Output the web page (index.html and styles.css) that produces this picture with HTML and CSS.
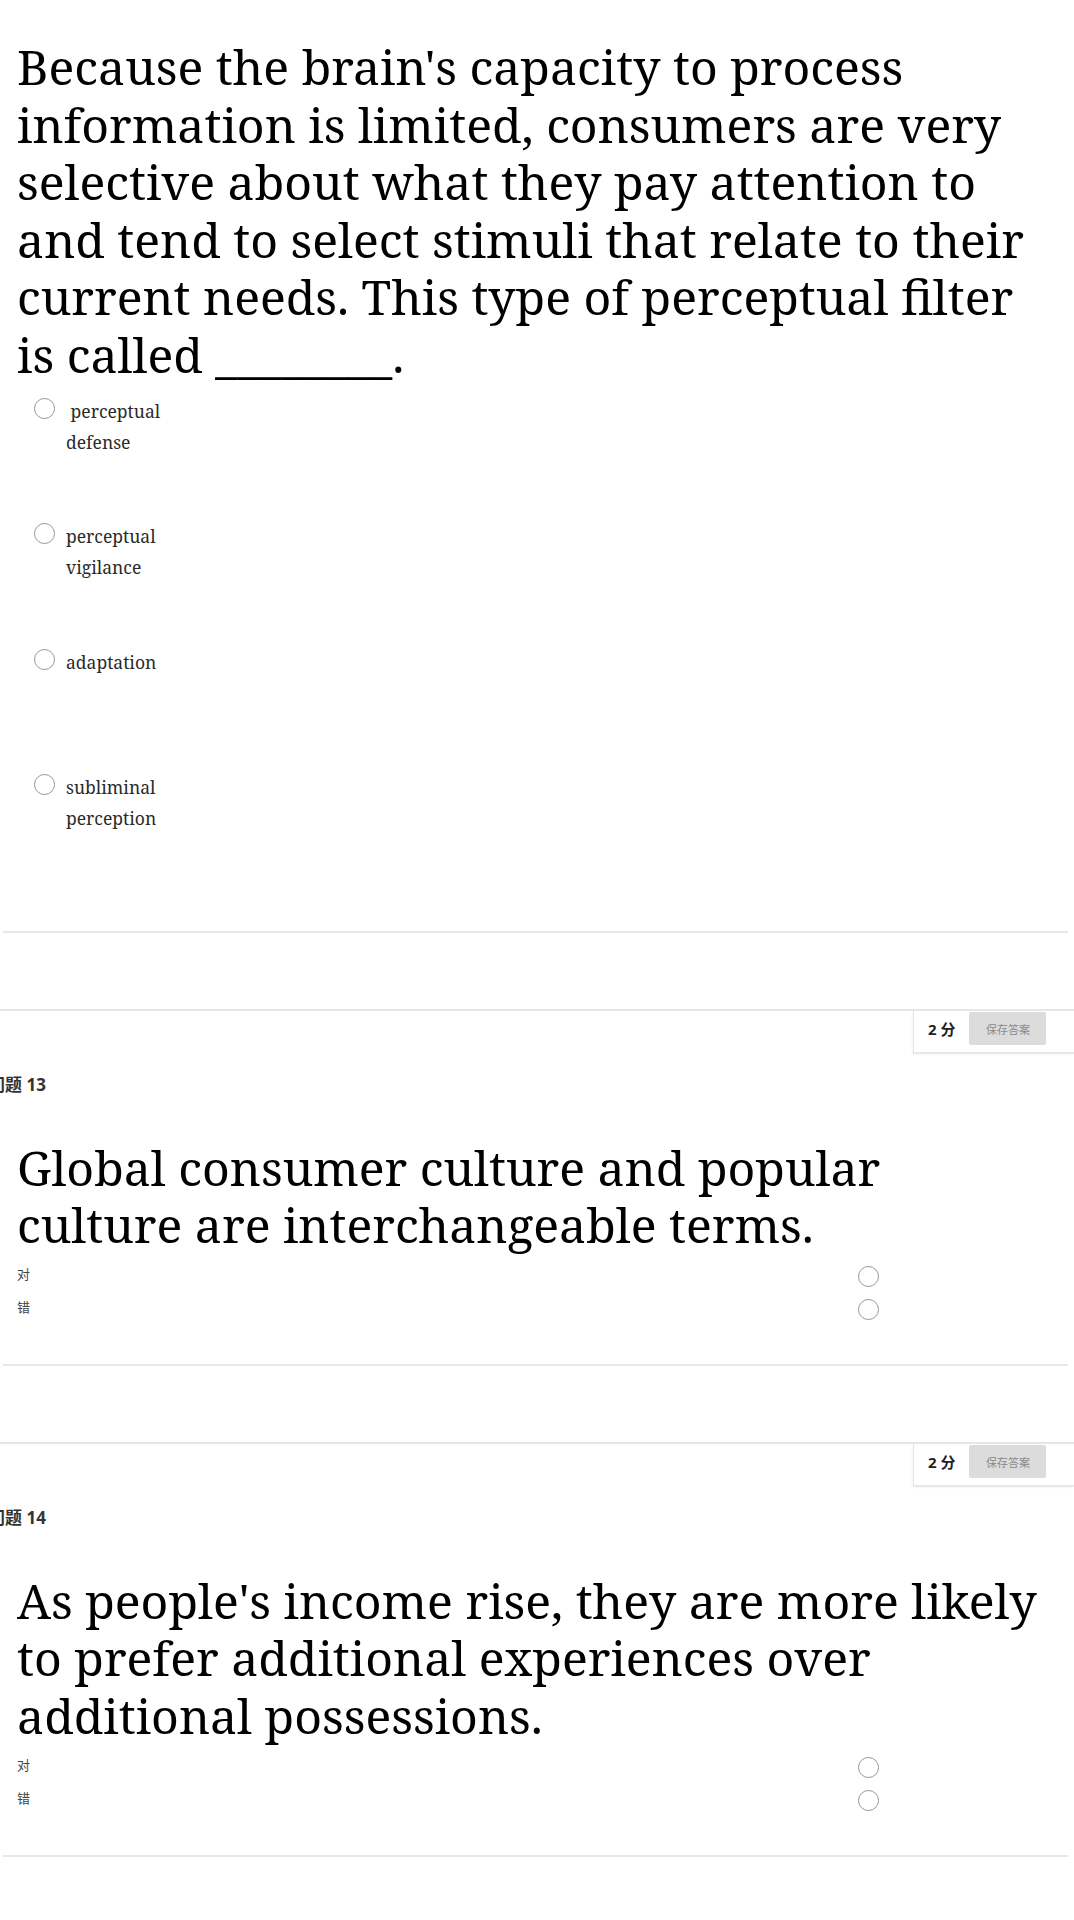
FILE: index.html
```html
<!DOCTYPE html>
<html lang="zh">
<head>
<meta charset="utf-8">
<title>Quiz</title>
<link rel="stylesheet" href="styles.css">
</head>
<body>
<section class="question q12">
  <div class="qtext">Because the brain's capacity to process information is limited, consumers are very selective about what they pay attention to and tend to select stimuli that relate to their current needs. This type of perceptual filter is called ________.</div>
  <ul class="opts">
    <li class="opt"><span class="radio"></span><span class="opt-label">&nbsp;perceptual defense</span></li>
    <li class="opt"><span class="radio"></span><span class="opt-label">perceptual vigilance</span></li>
    <li class="opt"><span class="radio"></span><span class="opt-label">adaptation</span></li>
    <li class="opt"><span class="radio"></span><span class="opt-label">subliminal perception</span></li>
  </ul>
</section>
<hr class="sep">

<section class="question">
  <div class="qhead">
    <div class="points"><span class="pts">2 分</span><span class="save">保存答案</span></div>
  </div>
  <div class="qnum">问题 13</div>
  <div class="qtext">Global consumer culture and popular culture are interchangeable terms.</div>
  <ul class="tf">
    <li class="tf-row"><span class="tf-label">对</span><span class="radio"></span></li>
    <li class="tf-row"><span class="tf-label">错</span><span class="radio"></span></li>
  </ul>
</section>
<hr class="sep">

<section class="question">
  <div class="qhead">
    <div class="points"><span class="pts">2 分</span><span class="save">保存答案</span></div>
  </div>
  <div class="qnum">问题 14</div>
  <div class="qtext">As people's income rise, they are more likely to prefer additional experiences over additional possessions.</div>
  <ul class="tf">
    <li class="tf-row"><span class="tf-label">对</span><span class="radio"></span></li>
    <li class="tf-row"><span class="tf-label">错</span><span class="radio"></span></li>
  </ul>
</section>
<hr class="sep">
</body>
</html>
```

FILE: styles.css
```css
html, body {
  margin: 0;
  padding: 0;
  background: #fff;
}
body {
  font-family: "Noto Serif", "Droid Serif", "DejaVu Serif", serif;
  color: #111;
  width: 1074px;
  overflow: hidden;
}
.question {
  display: flex;
  flex-direction: column;
}
.qtext {
  font-size: 48.2px;
  line-height: 57.6px;
  color: #000;
  padding: 0 29px 0 17px;
}
.q12 .qtext {
  padding-top: 38px;
}
.opts {
  list-style: none;
  margin: 0;
  padding: 0 0 35px 34px;
  display: flex;
  flex-direction: column;
}
.opt {
  display: flex;
  align-items: flex-start;
  height: 125.5px;
  gap: 11px;
}
.opts .opt:first-child {
  margin-top: 10px;
}
.opt .radio {
  margin-top: 4px;
}
.radio {
  width: 19px;
  height: 19px;
  border: 1.5px solid #979797;
  border-radius: 50%;
  flex: none;
  box-sizing: content-box;
}
.opt-label {
  width: 110px;
  padding-top: 2px;
  font-size: 17.5px;
  line-height: 31px;
  color: #2a2a2a;
}
.sep {
  margin: 0 6px 0 3px;
  height: 0;
  border: 0;
  border-top: 2px solid #e8e8e8;
}
.qhead {
  margin-top: 76px;
  border-top: 2px solid #e6e6e6;
  display: flex;
  justify-content: flex-end;
}
.points {
  display: flex;
  align-items: center;
  gap: 14px;
  width: 161px;
  box-sizing: border-box;
  height: 43px;
  padding: 0 0 5px 14px;
  border-left: 1px solid #e4e4e4;
  border-bottom: 2px solid #e8e8e8;
  box-shadow: -1px 1px 2px rgba(0,0,0,0.04);
  font-family: "Open Sans", "Noto Sans CJK SC", sans-serif;
}
.pts {
  font-size: 15px;
  font-weight: 700;
  color: #222;
}
.save {
  width: 77px;
  height: 33px;
  background: #dcdcdc;
  border-radius: 2px;
  color: #8a8a8a;
  font-size: 11px;
  font-family: "Noto Sans CJK SC", sans-serif;
  display: flex;
  align-items: center;
  justify-content: center;
}
.qnum {
  font-family: "Open Sans", "Noto Sans CJK SC", sans-serif;
  font-weight: 700;
  font-size: 17px;
  color: #333;
  margin: 20px 0 0 -12px;
  line-height: 22px;
  height: 65px;
}
.tf {
  list-style: none;
  margin: 8px 0 0 0;
  padding: 0 0 0 17px;
  display: flex;
  flex-direction: column;
  gap: 10px;
  height: 102px;
}
.tf-row {
  display: flex;
  align-items: center;
  width: 862px;
  justify-content: space-between;
  height: 23px;
}
.tf-row .radio {
  align-self: flex-start;
  margin-top: 4px;
}
.tf-label {
  font-family: "Noto Sans CJK SC", sans-serif;
  font-size: 13px;
  color: #444;
}
```
